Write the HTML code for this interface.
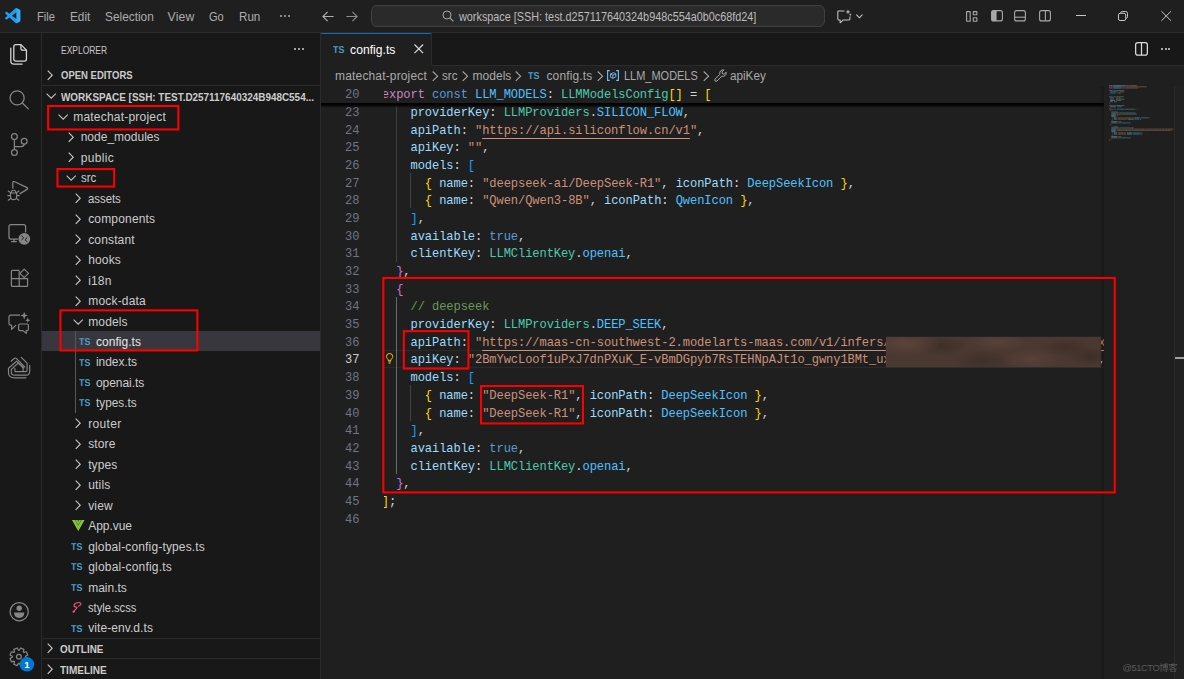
<!DOCTYPE html>
<html lang="en"><head><meta charset="utf-8"><title>config.ts - workspace</title>
<style>
html,body{margin:0;padding:0;overflow:hidden}
body{width:1184px;height:679px;overflow:hidden;background:#1f1f1f;position:relative;font-family:"Liberation Sans","Noto Sans CJK SC",sans-serif;color:#ccc}
.t,.r,svg.i{position:absolute}
.t{white-space:pre;display:block}
.r{display:block}
svg.i{overflow:visible}
.ln{position:absolute;left:330px;width:29.4px;text-align:right;color:#6e7681;white-space:pre}
.cl{position:absolute;left:-1.2px;white-space:pre;color:#d4d4d4}
.ln,.cl{font-family:"Liberation Mono",monospace;font-size:12.1px;letter-spacing:-0.093px;line-height:18px;height:18px}
.k{color:#c586c0}.c{color:#569cd6}.v{color:#4fc1ff}.ty{color:#4ec9b0}.p{color:#9cdcfe}.s{color:#ce9178}.cm{color:#6a9955}
.b1{color:#ffd700}.b2{color:#da70d6}.b3{color:#179fff}
.u{text-decoration:underline;text-decoration-thickness:1px;text-underline-offset:4px}
.rb{position:absolute;border:2px solid #e8000f;box-sizing:border-box}
</style></head><body>
<!-- title bar -->
<div class="r" style="left:0px;top:0px;width:1184px;height:32px;background:#1f1f1f;"></div>
<div class="r" style="left:0px;top:32px;width:1184px;height:1px;background:#2b2b2b;"></div>
<svg class="i" style="left:5.3px;top:8.4px;" width="15.3" height="15.3" viewBox="0 0 100 100" fill="none"><path d="M70.9119 99.3171C72.4869 99.9307 74.2828 99.8914 75.8725 99.1264L96.4608 89.2197C98.6242 88.1787 100 85.9892 100 83.5872V16.4133C100 14.0113 98.6243 11.8218 96.4609 10.7808L75.8725 0.873756C73.7862 -0.130129 71.3446 0.11576 69.5135 1.44695C69.252 1.63711 69.0028 1.84943 68.769 2.08341L29.3551 38.0415L12.1872 25.0096C10.589 23.7965 8.35363 23.8959 6.86933 25.2461L1.36303 30.2549C-0.452552 31.9064 -0.454633 34.7627 1.35853 36.417L16.2471 50.0001L1.35853 63.5832C-0.454633 65.2374 -0.452552 68.0938 1.36303 69.7453L6.86933 74.7541C8.35363 76.1043 10.589 76.2037 12.1872 74.9905L29.3551 61.9587L68.769 97.9167C69.3925 98.5406 70.1246 99.0104 70.9119 99.3171ZM75.0152 27.2989L45.1091 50.0001L75.0152 72.7012V27.2989Z" fill="#1f9cf0" fill-rule="evenodd"/><path d="M75 0.5 L96.5 10.8 Q100 12.5 100 16.4 V83.6 Q100 87.5 96.5 89.2 L75 99.5 Z" fill="#3ab4f7" opacity=".7"/></svg>
<span class="t" style="left:37.10px;top:6.60px;line-height:20px;font-size:12.2px;color:#adadad;transform:scaleX(0.9181);transform-origin:0 50%;">File</span>
<span class="t" style="left:69.60px;top:6.60px;line-height:20px;font-size:12.2px;color:#adadad;transform:scaleX(0.9656);transform-origin:0 50%;">Edit</span>
<span class="t" style="left:104.60px;top:6.60px;line-height:20px;font-size:12.2px;color:#adadad;transform:scaleX(0.9723);transform-origin:0 50%;">Selection</span>
<span class="t" style="left:167.60px;top:6.60px;line-height:20px;font-size:12.2px;color:#adadad;letter-spacing:0.144px;">View</span>
<span class="t" style="left:208.60px;top:6.60px;line-height:20px;font-size:12.2px;color:#adadad;transform:scaleX(0.9094);transform-origin:0 50%;">Go</span>
<span class="t" style="left:238.60px;top:6.60px;line-height:20px;font-size:12.2px;color:#adadad;transform:scaleX(0.9517);transform-origin:0 50%;">Run</span>
<div class="r" style="left:280.4px;top:15.3px;width:1.9px;height:1.9px;background:#adadad;border-radius:1px;"></div>
<div class="r" style="left:284.29999999999995px;top:15.3px;width:1.9px;height:1.9px;background:#adadad;border-radius:1px;"></div>
<div class="r" style="left:288.2px;top:15.3px;width:1.9px;height:1.9px;background:#adadad;border-radius:1px;"></div>
<svg class="i" style="left:322px;top:10.5px;" width="12" height="11" viewBox="0 0 12 11" fill="none"><path d="M5.6 0.8 L0.9 5.5 L5.6 10.2 M0.9 5.5 H11.6" stroke="#b0b0b0" stroke-width="1.1"/></svg>
<svg class="i" style="left:345.5px;top:10.5px;" width="12" height="11" viewBox="0 0 12 11" fill="none"><path d="M6.4 0.8 L11.1 5.5 L6.4 10.2 M11.1 5.5 H0.4" stroke="#8c8c8c" stroke-width="1.1"/></svg>
<div class="r" style="left:371px;top:5px;width:453.5px;height:21.5px;box-sizing:border-box;background:#2a2a2a;border:1px solid #404040;border-radius:6px"></div>
<svg class="i" style="left:442px;top:10px;" width="12" height="12" viewBox="0 0 12 12" fill="none"><circle cx="5" cy="5" r="4" stroke="#a8a8a8" stroke-width="1"/><path d="M7.9 7.9 L11.4 11.4" stroke="#a8a8a8" stroke-width="1.1"/></svg>
<span class="t" style="left:459.35px;top:6.50px;line-height:20px;font-size:12.1px;color:#bcbcbc;transform:scaleX(0.8959);transform-origin:0 50%;">workspace [SSH: test.d257117640324b948c554a0b0c68fd24]</span>
<svg class="i" style="left:836.6px;top:8.6px;" width="15" height="14.5" viewBox="0 0 15 14.5" fill="none"><path d="M7.4 1.9 H1.7 Q0.8 1.9 0.8 2.8 V10 Q0.8 10.9 1.7 10.9 H3.1 V13.8 L6.3 10.9 H12 Q12.9 10.9 12.9 10 V7.4" stroke="#c4c4c4" stroke-width="1.05" stroke-linejoin="round"/><path d="M11 0.3 L11.65 2.25 L13.6 2.9 L11.65 3.55 L11 5.5 L10.35 3.55 L8.4 2.9 L10.35 2.25 Z" fill="#c4c4c4"/><path d="M13.3 4.2 L13.7 5.3 L14.8 5.7 L13.7 6.1 L13.3 7.2 L12.9 6.1 L11.8 5.7 L12.9 5.3 Z" fill="#c4c4c4"/></svg>
<svg class="i" style="left:856px;top:14px;" width="7" height="5" viewBox="0 0 7 5" fill="none"><path d="M0.4 0.6 L3.4 3.8 L6.4 0.6" stroke="#c4c4c4" stroke-width="1.1"/></svg>
<svg class="i" style="left:966px;top:10.5px;" width="12" height="11" viewBox="0 0 12 11" fill="none"><rect x="0.6" y="0.6" width="3.6" height="9.6" rx="0.3" stroke="#a8a8a8" stroke-width="1.1"/><rect x="7.3" y="0.6" width="3.6" height="3.2" rx="0.3" stroke="#a8a8a8" stroke-width="1.1"/><rect x="7.3" y="6.8" width="3.6" height="3.4" rx="0.3" stroke="#a8a8a8" stroke-width="1.1"/></svg>
<svg class="i" style="left:990.5px;top:10px;" width="12" height="11.5" viewBox="0 0 12 11.5" fill="none"><rect x="0.6" y="0.6" width="10.8" height="10.3" rx="2" stroke="#a8a8a8" stroke-width="1.1"/><path d="M2.4 0.6 H5.6 V10.9 H2.4 Q0.6 10.9 0.6 9 V2.5 Q0.6 0.6 2.4 0.6 Z" fill="#a8a8a8"/></svg>
<svg class="i" style="left:1014.2px;top:10px;" width="12" height="11.5" viewBox="0 0 12 11.5" fill="none"><rect x="0.6" y="0.6" width="10.8" height="10.3" rx="2" stroke="#a8a8a8" stroke-width="1.1"/><path d="M0.6 7.2 H11.4" stroke="#a8a8a8" stroke-width="1.1"/></svg>
<svg class="i" style="left:1038.5px;top:10px;" width="12" height="11.5" viewBox="0 0 12 11.5" fill="none"><rect x="0.6" y="0.6" width="10.8" height="10.3" rx="2" stroke="#a8a8a8" stroke-width="1.1"/><path d="M6.4 0.6 V10.9" stroke="#a8a8a8" stroke-width="1.1"/></svg>
<div class="r" style="left:1075.5px;top:15px;width:10px;height:1px;background:#c8c8c8;"></div>
<svg class="i" style="left:1118px;top:11px;" width="10" height="10" viewBox="0 0 10 10" fill="none"><rect x="0.5" y="2.3" width="7.2" height="7.2" rx="1.6" stroke="#c8c8c8" stroke-width="1"/><path d="M2.6 2 Q2.8 0.5 4.3 0.5 H7.6 Q9.5 0.5 9.5 2.4 V5.7 Q9.5 7.2 8 7.4" stroke="#c8c8c8" stroke-width="1"/></svg>
<svg class="i" style="left:1160.5px;top:11px;" width="10.5" height="10" viewBox="0 0 10.5 10" fill="none"><path d="M0.4 0.2 L10.1 9.8 M10.1 0.2 L0.4 9.8" stroke="#c8c8c8" stroke-width="1"/></svg>
<!-- activity bar -->
<div class="r" style="left:0px;top:33px;width:41px;height:646px;background:#181818;"></div>
<div class="r" style="left:41px;top:33px;width:1px;height:646px;background:#2b2b2b;"></div>
<svg class="i" style="left:10px;top:44.4px;" width="17.3" height="21.2" viewBox="0 0 17.3 21.6" fill="none"><path d="M5.9 0.65 H11 L16.6 6.2 V15.2 Q16.6 17.4 14.4 17.4 H5.9 Q3.7 17.4 3.7 15.2 V2.8 Q3.7 0.65 5.9 0.65 Z" stroke="#d7d7d7" stroke-width="1.3" stroke-linejoin="round"/><path d="M11 0.8 V4.6 Q11 6.2 12.6 6.2 H16.4" stroke="#d7d7d7" stroke-width="1.3"/><path d="M0.65 4.2 V17.3 Q0.65 20.5 3.9 20.5 H12.2" stroke="#d7d7d7" stroke-width="1.3" stroke-linecap="round"/></svg>
<svg class="i" style="left:0px;top:84px;" width="42" height="30" viewBox="0 84 42 30" fill="none"><circle cx="17.1" cy="97.9" r="7.05" stroke="#868686" stroke-width="1.25"/><path d="M22.3 103 L28.3 108.9" stroke="#868686" stroke-width="1.3" stroke-linecap="round"/></svg>
<svg class="i" style="left:0px;top:130px;" width="42" height="30" viewBox="0 130 42 30" fill="none"><circle cx="14.4" cy="136.6" r="2.9" stroke="#868686" stroke-width="1.25"/><circle cx="14.4" cy="152.4" r="2.9" stroke="#868686" stroke-width="1.25"/><circle cx="24.2" cy="141.3" r="2.9" stroke="#868686" stroke-width="1.25"/><path d="M14.4 139.5 V149.5 M24.2 144.2 Q24.2 146.6 21 146.6 H14.4" stroke="#868686" stroke-width="1.25"/></svg>
<svg class="i" style="left:0px;top:176px;" width="42" height="30" viewBox="0 176 42 30" fill="none"><path d="M12.8 188.2 V183 Q12.8 180.9 14.8 181.8 L27 187.6 Q28.4 188.5 27 189.4 L20 193.6" stroke="#868686" stroke-width="1.25" stroke-linecap="round" stroke-linejoin="round"/><path d="M10.5 193 H16.7 V196.4 Q16.7 199.6 13.6 199.6 Q10.5 199.6 10.5 196.4 Z" stroke="#868686" stroke-width="1.15" stroke-linejoin="round"/><path d="M11.3 193 Q11.3 190.2 13.6 190.2 Q15.9 190.2 15.9 193" stroke="#868686" stroke-width="1.15"/><path d="M10.4 195.6 H7.8 M16.8 195.6 H19.4 M10.8 192.8 L8.2 191 M16.4 192.8 L19 191 M10.9 198.2 L8.3 200.2 M16.3 198.2 L18.9 200.2" stroke="#868686" stroke-width="1.1" stroke-linecap="round"/></svg>
<svg class="i" style="left:0px;top:220px;" width="42" height="30" viewBox="0 220 42 30" fill="none"><path d="M18 239 H11 Q9 239 9 237 V226.6 Q9 224.6 11 224.6 H23.6 Q25.6 224.6 25.6 226.6 V232.5" stroke="#868686" stroke-width="1.25"/><path d="M14 239 V241.4 M11.2 241.5 H16.8" stroke="#868686" stroke-width="1.25"/><circle cx="24.3" cy="238.8" r="5.9" fill="#868686"/><path d="M21.7 236 L23.7 237.9 L21.7 239.8 M27 237.8 L25 239.7 L27 241.6" stroke="#181818" stroke-width="1" stroke-linecap="round" stroke-linejoin="round"/></svg>
<svg class="i" style="left:0px;top:264px;" width="42" height="30" viewBox="0 264 42 30" fill="none"><path d="M19.2 270.4 H12.4 Q11.4 270.4 11.4 271.4 V285.4 Q11.4 286.4 12.4 286.4 H26.6 Q27.6 286.4 27.6 285.4 V278.6 H11.4 M19.2 270.4 V286.4" stroke="#868686" stroke-width="1.2" stroke-linejoin="round"/><path d="M24.2 269.1 L28.5 273.4 L24.2 277.7 L19.9 273.4 Z" stroke="#868686" stroke-width="1.2" stroke-linejoin="round"/></svg>
<svg class="i" style="left:0px;top:308px;" width="42" height="30" viewBox="0 308 42 30" fill="none"><path d="M19.6 315.2 H10.6 Q9 315.2 9 316.8 V323.6 Q9 325.2 10.6 325.2 H11.6 V329.4 L15.8 325.4" stroke="#868686" stroke-width="1.2" stroke-linejoin="round" stroke-linecap="round"/><path d="M20 324 H27 Q28.4 324 28.4 325.4 V329.2 Q28.4 330.6 27 330.6 H26.2 V333.4 L23 330.6 H20 Q18.6 330.6 18.6 329.2 V325.4 Q18.6 324 20 324 Z" stroke="#868686" stroke-width="1.2" stroke-linejoin="round"/><path d="M24.2 311.8 L25.2 314.6 L28 315.6 L25.2 316.6 L24.2 319.4 L23.2 316.6 L20.4 315.6 L23.2 314.6 Z" fill="#868686"/><path d="M27.8 317.6 L28.5 319.6 L30.5 320.3 L28.5 321 L27.8 323 L27.1 321 L25.1 320.3 L27.1 319.6 Z" fill="#868686"/></svg>
<svg class="i" style="left:0px;top:352px;" width="42" height="30" viewBox="0 352 42 30" fill="none"><g stroke="#868686" stroke-width="1.15" stroke-linecap="round" stroke-linejoin="round"><path d="M11.1 361.2 L14.2 358.5 Q15.4 357.5 16.6 358.6 L24.7 367"/><path d="M25.9 377.85 H14.85 Q8.5 377.85 8.5 372.7 V368.3 L16.5 361.2 L23.8 368"/><path d="M29.7 365.4 V370.9 Q29.7 375.1 26.2 375.1 H14.85 Q11.3 375.1 11.3 372.7 V369.5 L18.15 363.1 L23.1 367.6 V370.6"/><path d="M21.2 357.4 L27.1 363.1 V370 Q27.1 371.6 25.5 371.6 H14.9 V368.6"/></g></svg>
<svg class="i" style="left:0px;top:598px;" width="42" height="28" viewBox="0 598 42 28" fill="none"><circle cx="19.2" cy="611.7" r="9.1" stroke="#868686" stroke-width="1.25"/><circle cx="19.2" cy="608.3" r="2.7" fill="#868686"/><path d="M14.1 612.6 H24.3 Q24.3 617.9 19.2 617.9 Q14.1 617.9 14.1 612.6 Z" fill="#868686"/></svg>
<svg class="i" style="left:0px;top:644px;" width="42" height="35" viewBox="0 644 42 35" fill="none"><path d="M27.73 658.52 L26.36 661.83 L23.85 661.17 L23.27 661.75 L23.93 664.26 L20.62 665.63 L19.31 663.39 L18.49 663.39 L17.18 665.63 L13.87 664.26 L14.53 661.75 L13.95 661.17 L11.44 661.83 L10.07 658.52 L12.31 657.21 L12.31 656.39 L10.07 655.08 L11.44 651.77 L13.95 652.43 L14.53 651.85 L13.87 649.34 L17.18 647.97 L18.49 650.21 L19.31 650.21 L20.62 647.97 L23.93 649.34 L23.27 651.85 L23.85 652.43 L26.36 651.77 L27.73 655.08 L25.49 656.39 L25.49 657.21 Z" stroke="#868686" stroke-width="1.2" stroke-linejoin="round"/><circle cx="18.9" cy="656.8" r="2.4" stroke="#868686" stroke-width="1.2"/><circle cx="26.9" cy="664.3" r="7.3" fill="#0078d4"/></svg>
<span class="t" style="left:23.9px;top:658.8px;width:6px;text-align:center;font-size:9.5px;line-height:11px;font-weight:bold;color:#fff">1</span>
<!-- side bar -->
<div class="r" style="left:42px;top:33px;width:278px;height:646px;background:#181818;"></div>
<div class="r" style="left:320px;top:33px;width:1px;height:646px;background:#2b2b2b;"></div>
<span class="t" style="left:60.70px;top:40.50px;line-height:20px;font-size:10.4px;color:#c8c8c8;transform:scaleX(0.8139);transform-origin:0 50%;">EXPLORER</span>
<div class="r" style="left:293.9px;top:47.7px;width:2px;height:2px;background:#cccccc;border-radius:1px;"></div>
<div class="r" style="left:297.7px;top:47.7px;width:2px;height:2px;background:#cccccc;border-radius:1px;"></div>
<div class="r" style="left:301.5px;top:47.7px;width:2px;height:2px;background:#cccccc;border-radius:1px;"></div>
<svg class="i" style="left:47.300000000000004px;top:70.39999999999999px;" width="6" height="10.4" viewBox="0 0 6 10.4" fill="none"><path d="M0.7 0.6 L5.2 5.2 L0.7 9.8" stroke="#c8c8c8" stroke-width="1.15"/></svg>
<span class="t" style="left:60.70px;top:66.30px;line-height:20px;font-size:10.3px;color:#cccccc;transform:scaleX(0.9221);transform-origin:0 50%;font-weight:bold;">OPEN EDITORS</span>
<div class="r" style="left:42px;top:85px;width:278px;height:1px;background:#2b2b2b;"></div>
<svg class="i" style="left:46.4px;top:93.0px;" width="10.4" height="6" viewBox="0 0 10.4 6" fill="none"><path d="M0.6 0.6 L5.2 5.2 L9.8 0.6" stroke="#c5c5c5" stroke-width="1.05"/></svg>
<span class="t" style="left:60.70px;top:87.70px;line-height:20px;font-size:10.3px;color:#cccccc;transform:scaleX(0.9635);transform-origin:0 50%;font-weight:bold;">WORKSPACE [SSH: TEST.D257117640324B948C554...</span>
<div class="r" style="left:42px;top:331.2px;width:278px;height:20.2px;background:#37373d;"></div>
<div class="r" style="left:75px;top:331.2px;width:1px;height:81.4px;background:#585858;"></div>
<svg class="i" style="left:58px;top:113.95px;" width="10.4" height="6" viewBox="0 0 10.4 6" fill="none"><path d="M0.6 0.6 L5.2 5.2 L9.8 0.6" stroke="#c5c5c5" stroke-width="1.05"/></svg>
<span class="t" style="left:73.20px;top:106.95px;line-height:20px;font-size:12px;color:#cccccc;letter-spacing:0.214px;">matechat-project</span>
<svg class="i" style="left:67.9px;top:132.01000000000002px;" width="6" height="10.4" viewBox="0 0 6 10.4" fill="none"><path d="M0.7 0.6 L5.2 5.2 L0.7 9.8" stroke="#c8c8c8" stroke-width="1.15"/></svg>
<span class="t" style="left:80.70px;top:127.41px;line-height:20px;font-size:12px;color:#cccccc;letter-spacing:0.006px;">node_modules</span>
<svg class="i" style="left:67.9px;top:152.47000000000003px;" width="6" height="10.4" viewBox="0 0 6 10.4" fill="none"><path d="M0.7 0.6 L5.2 5.2 L0.7 9.8" stroke="#c8c8c8" stroke-width="1.15"/></svg>
<span class="t" style="left:80.70px;top:147.87px;line-height:20px;font-size:12px;color:#cccccc;letter-spacing:0.324px;">public</span>
<svg class="i" style="left:65.6px;top:175.33px;" width="10.4" height="6" viewBox="0 0 10.4 6" fill="none"><path d="M0.6 0.6 L5.2 5.2 L9.8 0.6" stroke="#c5c5c5" stroke-width="1.05"/></svg>
<span class="t" style="left:80.70px;top:168.33px;line-height:20px;font-size:12px;color:#cccccc;transform:scaleX(0.9565);transform-origin:0 50%;">src</span>
<svg class="i" style="left:75.3px;top:193.39000000000001px;" width="6" height="10.4" viewBox="0 0 6 10.4" fill="none"><path d="M0.7 0.6 L5.2 5.2 L0.7 9.8" stroke="#c8c8c8" stroke-width="1.15"/></svg>
<span class="t" style="left:88.20px;top:188.79px;line-height:20px;font-size:12px;color:#cccccc;transform:scaleX(0.9457);transform-origin:0 50%;">assets</span>
<svg class="i" style="left:75.3px;top:213.85000000000002px;" width="6" height="10.4" viewBox="0 0 6 10.4" fill="none"><path d="M0.7 0.6 L5.2 5.2 L0.7 9.8" stroke="#c8c8c8" stroke-width="1.15"/></svg>
<span class="t" style="left:88.20px;top:209.25px;line-height:20px;font-size:12px;color:#cccccc;letter-spacing:0.168px;">components</span>
<svg class="i" style="left:75.3px;top:234.31px;" width="6" height="10.4" viewBox="0 0 6 10.4" fill="none"><path d="M0.7 0.6 L5.2 5.2 L0.7 9.8" stroke="#c8c8c8" stroke-width="1.15"/></svg>
<span class="t" style="left:88.20px;top:229.71px;line-height:20px;font-size:12px;color:#cccccc;letter-spacing:0.148px;">constant</span>
<svg class="i" style="left:75.3px;top:254.77000000000004px;" width="6" height="10.4" viewBox="0 0 6 10.4" fill="none"><path d="M0.7 0.6 L5.2 5.2 L0.7 9.8" stroke="#c8c8c8" stroke-width="1.15"/></svg>
<span class="t" style="left:88.20px;top:250.17px;line-height:20px;font-size:12px;color:#cccccc;letter-spacing:0.156px;">hooks</span>
<svg class="i" style="left:75.3px;top:275.23px;" width="6" height="10.4" viewBox="0 0 6 10.4" fill="none"><path d="M0.7 0.6 L5.2 5.2 L0.7 9.8" stroke="#c8c8c8" stroke-width="1.15"/></svg>
<span class="t" style="left:88.20px;top:270.63px;line-height:20px;font-size:12px;color:#cccccc;letter-spacing:0.153px;">i18n</span>
<svg class="i" style="left:75.3px;top:295.69px;" width="6" height="10.4" viewBox="0 0 6 10.4" fill="none"><path d="M0.7 0.6 L5.2 5.2 L0.7 9.8" stroke="#c8c8c8" stroke-width="1.15"/></svg>
<span class="t" style="left:88.20px;top:291.09px;line-height:20px;font-size:12px;color:#cccccc;letter-spacing:0.197px;">mock-data</span>
<svg class="i" style="left:73px;top:318.55px;" width="10.4" height="6" viewBox="0 0 10.4 6" fill="none"><path d="M0.6 0.6 L5.2 5.2 L9.8 0.6" stroke="#c5c5c5" stroke-width="1.05"/></svg>
<span class="t" style="left:88.20px;top:311.55px;line-height:20px;font-size:12px;color:#cccccc;letter-spacing:0.144px;">models</span>
<span class="t" style="left:78.65px;top:333.11px;line-height:20px;font-size:9.9px;font-weight:bold;color:#4b9fc9;text-rendering:geometricPrecision;transform:scaleX(0.9011);transform-origin:0 50%">TS</span>
<span class="t" style="left:95.95px;top:332.01px;line-height:20px;font-size:12px;color:#e6e6e6;letter-spacing:0.040px;">config.ts</span>
<span class="t" style="left:78.65px;top:353.57px;line-height:20px;font-size:9.9px;font-weight:bold;color:#4b9fc9;text-rendering:geometricPrecision;transform:scaleX(0.9011);transform-origin:0 50%">TS</span>
<span class="t" style="left:95.95px;top:352.47px;line-height:20px;font-size:12px;color:#cccccc;letter-spacing:-0.038px;">index.ts</span>
<span class="t" style="left:78.65px;top:374.03px;line-height:20px;font-size:9.9px;font-weight:bold;color:#4b9fc9;text-rendering:geometricPrecision;transform:scaleX(0.9011);transform-origin:0 50%">TS</span>
<span class="t" style="left:95.95px;top:372.93px;line-height:20px;font-size:12px;color:#cccccc;letter-spacing:-0.045px;">openai.ts</span>
<span class="t" style="left:78.65px;top:394.49px;line-height:20px;font-size:9.9px;font-weight:bold;color:#4b9fc9;text-rendering:geometricPrecision;transform:scaleX(0.9011);transform-origin:0 50%">TS</span>
<span class="t" style="left:95.95px;top:393.39px;line-height:20px;font-size:12px;color:#cccccc;transform:scaleX(0.9807);transform-origin:0 50%;">types.ts</span>
<svg class="i" style="left:75.3px;top:418.45000000000005px;" width="6" height="10.4" viewBox="0 0 6 10.4" fill="none"><path d="M0.7 0.6 L5.2 5.2 L0.7 9.8" stroke="#c8c8c8" stroke-width="1.15"/></svg>
<span class="t" style="left:88.20px;top:413.85px;line-height:20px;font-size:12px;color:#cccccc;letter-spacing:0.325px;">router</span>
<svg class="i" style="left:75.3px;top:438.91px;" width="6" height="10.4" viewBox="0 0 6 10.4" fill="none"><path d="M0.7 0.6 L5.2 5.2 L0.7 9.8" stroke="#c8c8c8" stroke-width="1.15"/></svg>
<span class="t" style="left:88.20px;top:434.31px;line-height:20px;font-size:12px;color:#cccccc;letter-spacing:0.124px;">store</span>
<svg class="i" style="left:75.3px;top:459.37px;" width="6" height="10.4" viewBox="0 0 6 10.4" fill="none"><path d="M0.7 0.6 L5.2 5.2 L0.7 9.8" stroke="#c8c8c8" stroke-width="1.15"/></svg>
<span class="t" style="left:88.20px;top:454.77px;line-height:20px;font-size:12px;color:#cccccc;letter-spacing:0.074px;">types</span>
<svg class="i" style="left:75.3px;top:479.83000000000004px;" width="6" height="10.4" viewBox="0 0 6 10.4" fill="none"><path d="M0.7 0.6 L5.2 5.2 L0.7 9.8" stroke="#c8c8c8" stroke-width="1.15"/></svg>
<span class="t" style="left:88.20px;top:475.23px;line-height:20px;font-size:12px;color:#cccccc;letter-spacing:0.192px;">utils</span>
<svg class="i" style="left:75.3px;top:500.29px;" width="6" height="10.4" viewBox="0 0 6 10.4" fill="none"><path d="M0.7 0.6 L5.2 5.2 L0.7 9.8" stroke="#c8c8c8" stroke-width="1.15"/></svg>
<span class="t" style="left:88.20px;top:495.69px;line-height:20px;font-size:12px;color:#cccccc;letter-spacing:0.136px;">view</span>
<svg class="i" style="left:72.1px;top:519.75px;" width="12.5" height="11" viewBox="0 0 12.5 11" fill="none"><path d="M0 0 H2.9 L6.25 5.9 L9.6 0 H12.5 L6.25 11 Z" fill="#84c43e"/><path d="M3.5 0 H5.2 L6.25 1.9 L7.3 0 H9 L6.25 4.9 Z" fill="#84c43e"/><path d="M0 0 H12.5 L6.25 11 Z" fill="#84c43e" opacity=".45"/></svg>
<span class="t" style="left:88.20px;top:516.15px;line-height:20px;font-size:12px;color:#cccccc;letter-spacing:-0.033px;">App.vue</span>
<span class="t" style="left:71.15px;top:537.71px;line-height:20px;font-size:9.9px;font-weight:bold;color:#4b9fc9;text-rendering:geometricPrecision;transform:scaleX(0.9011);transform-origin:0 50%">TS</span>
<span class="t" style="left:88.20px;top:536.61px;line-height:20px;font-size:12px;color:#cccccc;letter-spacing:0.155px;">global-config-types.ts</span>
<span class="t" style="left:71.15px;top:558.17px;line-height:20px;font-size:9.9px;font-weight:bold;color:#4b9fc9;text-rendering:geometricPrecision;transform:scaleX(0.9011);transform-origin:0 50%">TS</span>
<span class="t" style="left:88.20px;top:557.07px;line-height:20px;font-size:12px;color:#cccccc;letter-spacing:0.193px;">global-config.ts</span>
<span class="t" style="left:71.15px;top:578.63px;line-height:20px;font-size:9.9px;font-weight:bold;color:#4b9fc9;text-rendering:geometricPrecision;transform:scaleX(0.9011);transform-origin:0 50%">TS</span>
<span class="t" style="left:88.20px;top:577.53px;line-height:20px;font-size:12px;color:#cccccc;letter-spacing:-0.018px;">main.ts</span>
<svg class="i" style="left:72.2px;top:602.39px;" width="9.4" height="10.6" viewBox="0 0 9.4 10.6" fill="none"><path d="M6.6 4.1 Q9.6 2.6 8.7 1.2 Q7.4 -0.1 4.4 1.1 Q1.4 2.5 2.1 4.1 Q3 5.4 5 5.1 Q4.8 7.2 2.7 8.2 Q0.7 9.1 1 10 Q1.9 10.6 2.7 9.5" stroke="#f0507c" stroke-width="1.1" stroke-linecap="round" stroke-linejoin="round"/></svg>
<span class="t" style="left:88.20px;top:597.99px;line-height:20px;font-size:12px;color:#cccccc;transform:scaleX(0.9287);transform-origin:0 50%;">style.scss</span>
<span class="t" style="left:71.15px;top:619.55px;line-height:20px;font-size:9.9px;font-weight:bold;color:#4b9fc9;text-rendering:geometricPrecision;transform:scaleX(0.9011);transform-origin:0 50%">TS</span>
<span class="t" style="left:88.20px;top:618.45px;line-height:20px;font-size:12px;color:#cccccc;letter-spacing:0.077px;">vite-env.d.ts</span>
<div class="r" style="left:42px;top:638px;width:278px;height:1px;background:#2b2b2b;"></div>
<svg class="i" style="left:47.300000000000004px;top:643.3px;" width="6" height="10.4" viewBox="0 0 6 10.4" fill="none"><path d="M0.7 0.6 L5.2 5.2 L0.7 9.8" stroke="#c8c8c8" stroke-width="1.15"/></svg>
<span class="t" style="left:59.80px;top:639.80px;line-height:20px;font-size:10.3px;color:#cccccc;transform:scaleX(0.9601);transform-origin:0 50%;font-weight:bold;">OUTLINE</span>
<div class="r" style="left:42px;top:658px;width:278px;height:1px;background:#2b2b2b;"></div>
<svg class="i" style="left:47.300000000000004px;top:664.1999999999999px;" width="6" height="10.4" viewBox="0 0 6 10.4" fill="none"><path d="M0.7 0.6 L5.2 5.2 L0.7 9.8" stroke="#c8c8c8" stroke-width="1.15"/></svg>
<span class="t" style="left:59.80px;top:660.60px;line-height:20px;font-size:10.3px;color:#cccccc;transform:scaleX(0.9737);transform-origin:0 50%;font-weight:bold;">TIMELINE</span>
<!-- editor group -->
<div class="r" style="left:321px;top:33px;width:863px;height:32px;background:#181818;"></div>
<div class="r" style="left:321px;top:64.5px;width:863px;height:1px;background:#2b2b2b;"></div>
<div class="r" style="left:321px;top:33px;width:110.5px;height:32.5px;background:#1f1f1f;"></div>
<div class="r" style="left:321px;top:33px;width:110.5px;height:1px;background:#0b6cbd;"></div>
<div class="r" style="left:431.3px;top:33px;width:1px;height:32px;background:#2b2b2b;"></div>
<span class="t" style="left:333.20px;top:40.70px;line-height:20px;font-size:9.9px;font-weight:bold;color:#4b9fc9;text-rendering:geometricPrecision;transform:scaleX(0.9011);transform-origin:0 50%">TS</span>
<span class="t" style="left:350.10px;top:39.90px;line-height:20px;font-size:12.1px;color:#ffffff;letter-spacing:0.026px;">config.ts</span>
<svg class="i" style="left:413.5px;top:44.2px;" width="9.6" height="9.6" viewBox="0 0 9.6 9.6" fill="none"><path d="M0.5 0.5 L9.1 9.1 M9.1 0.5 L0.5 9.1" stroke="#e0e0e0" stroke-width="1.1"/></svg>
<svg class="i" style="left:1135.1px;top:42.1px;" width="13" height="13.8" viewBox="0 0 13 13.8" fill="none"><rect x="0.65" y="0.65" width="11.7" height="12.5" rx="2.2" stroke="#dcdcdc" stroke-width="1.25"/><path d="M6.5 0.65 V13.15" stroke="#dcdcdc" stroke-width="1.25"/></svg>
<div class="r" style="left:1160.7px;top:48.2px;width:2px;height:2px;background:#d8d8d8;border-radius:1px;"></div>
<div class="r" style="left:1164.5px;top:48.2px;width:2px;height:2px;background:#d8d8d8;border-radius:1px;"></div>
<div class="r" style="left:1168.3px;top:48.2px;width:2px;height:2px;background:#d8d8d8;border-radius:1px;"></div>
<span class="t" style="left:335.10px;top:65.80px;line-height:20px;font-size:12px;color:#a9a9a9;letter-spacing:0.152px;">matechat-project</span>
<svg class="i" style="left:432.3px;top:70.6px;" width="6.4" height="10.4" viewBox="0 0 6.4 10.4" fill="none"><path d="M0.7 0.5 L5.6 5.2 L0.7 9.9" stroke="#a9a9a9" stroke-width="1.05"/></svg>
<span class="t" style="left:442.30px;top:65.80px;line-height:20px;font-size:12px;color:#a9a9a9;transform:scaleX(0.9721);transform-origin:0 50%;">src</span>
<svg class="i" style="left:462px;top:70.6px;" width="6.4" height="10.4" viewBox="0 0 6.4 10.4" fill="none"><path d="M0.7 0.5 L5.6 5.2 L0.7 9.9" stroke="#a9a9a9" stroke-width="1.05"/></svg>
<span class="t" style="left:472.60px;top:65.80px;line-height:20px;font-size:12px;color:#a9a9a9;letter-spacing:0.019px;">models</span>
<svg class="i" style="left:515.3px;top:70.6px;" width="6.4" height="10.4" viewBox="0 0 6.4 10.4" fill="none"><path d="M0.7 0.5 L5.6 5.2 L0.7 9.9" stroke="#a9a9a9" stroke-width="1.05"/></svg>
<span class="t" style="left:528.30px;top:67.40px;line-height:20px;font-size:9.9px;font-weight:bold;color:#4b9fc9;text-rendering:geometricPrecision;transform:scaleX(0.9011);transform-origin:0 50%">TS</span>
<span class="t" style="left:546.50px;top:65.80px;line-height:20px;font-size:12px;color:#a9a9a9;letter-spacing:0.123px;">config.ts</span>
<svg class="i" style="left:596.9px;top:70.6px;" width="6.4" height="10.4" viewBox="0 0 6.4 10.4" fill="none"><path d="M0.7 0.5 L5.6 5.2 L0.7 9.9" stroke="#a9a9a9" stroke-width="1.05"/></svg>
<svg class="i" style="left:607.4px;top:70.2px;" width="12" height="11" viewBox="0 0 12 11" fill="none"><path d="M2.8 0.6 H0.6 V10.4 H2.8 M9.2 0.6 H11.4 V10.4 H9.2" stroke="#75beff" stroke-width="1.1"/><path d="M3.4 4 L6.4 2.6 L8.8 3.8 V6.8 L5.8 8.4 L3.4 7.2 Z M3.4 4 L5.8 5.2 L8.8 3.8 M5.8 5.2 V8.4" stroke="#75beff" stroke-width="0.9" stroke-linejoin="round"/></svg>
<span class="t" style="left:624.10px;top:65.80px;line-height:20px;font-size:12px;color:#a9a9a9;transform:scaleX(0.9145);transform-origin:0 50%;">LLM_MODELS</span>
<svg class="i" style="left:702.5px;top:70.6px;" width="6.4" height="10.4" viewBox="0 0 6.4 10.4" fill="none"><path d="M0.7 0.5 L5.6 5.2 L0.7 9.9" stroke="#a9a9a9" stroke-width="1.05"/></svg>
<svg class="i" style="left:714px;top:69.39999999999999px;" width="13" height="13" viewBox="0 0 13 13" fill="none"><path d="M12.2 3.2 Q12.6 5.6 10.8 6.8 Q9.4 7.7 7.8 7.2 L3 12 Q2 12.8 1.1 11.9 Q0.3 11 1.1 10 L5.9 5.3 Q5.3 3.4 6.6 1.9 Q8 0.5 10 0.9 L8 2.9 L8.4 4.7 L10.2 5.1 Z" stroke="#a9a9a9" stroke-width="1" stroke-linejoin="round"/></svg>
<span class="t" style="left:729.60px;top:65.80px;line-height:20px;font-size:12px;color:#a9a9a9;transform:scaleX(0.9757);transform-origin:0 50%;">apiKey</span>
<div class="r" style="left:384.2px;top:85.5px;width:719.8px;height:593.5px;overflow:hidden"><div class="r" style="left:-1.2px;top:0;width:721px;height:593.5px">
<div class="r" style="left:0;top:264.37px;width:721px;height:17.7px;box-sizing:border-box;border-top:1px solid #2a2a2a;border-bottom:1px solid #2a2a2a"></div>
<div class="cl" style="top:18.45px">    <span class="p">providerKey</span>: <span class="ty">LLMProviders</span>.<span class="v">SILICON_FLOW</span>,</div>
<div class="cl" style="top:36.13px">    <span class="p">apiPath</span>: <span class="s">&quot;</span><span class="s u">https://api.siliconflow.cn/v1</span><span class="s">&quot;</span>,</div>
<div class="cl" style="top:53.81px">    <span class="p">apiKey</span>: <span class="s">&quot;&quot;</span>,</div>
<div class="cl" style="top:71.49px">    <span class="p">models</span>: <span class="b3">[</span></div>
<div class="cl" style="top:89.17px">      <span class="b1">{</span> <span class="p">name</span>: <span class="s">&quot;deepseek-ai/DeepSeek-R1&quot;</span>, <span class="p">iconPath</span>: <span class="v">DeepSeekIcon</span> <span class="b1">}</span>,</div>
<div class="cl" style="top:106.85px">      <span class="b1">{</span> <span class="p">name</span>: <span class="s">&quot;Qwen/Qwen3-8B&quot;</span>, <span class="p">iconPath</span>: <span class="v">QwenIcon</span> <span class="b1">}</span>,</div>
<div class="cl" style="top:124.53px">    <span class="b3">]</span>,</div>
<div class="cl" style="top:142.21px">    <span class="p">available</span>: <span class="c">true</span>,</div>
<div class="cl" style="top:159.89px">    <span class="p">clientKey</span>: <span class="ty">LLMClientKey</span>.<span class="v">openai</span>,</div>
<div class="cl" style="top:177.57px">  <span class="b2">}</span>,</div>
<div class="cl" style="top:195.25px">  <span class="b2">{</span></div>
<div class="cl" style="top:212.93px">    <span class="cm">// deepseek</span></div>
<div class="cl" style="top:230.61px">    <span class="p">providerKey</span>: <span class="ty">LLMProviders</span>.<span class="v">DEEP_SEEK</span>,</div>
<div class="cl" style="top:248.29px">    <span class="p">apiPath</span>: <span class="s">&quot;</span><span class="s u">https://maas-cn-southwest-2.modelarts-maas.com/v1/infers/xxxxxxxx-xxxx-xxxx-xxxx-xxxxxxfxxxxx/v1</span><span class="s">&quot;</span>,</div>
<div class="cl" style="top:265.97px">    <span class="p">apiKey</span>: <span class="s">&quot;2BmYwcLoof1uPxJ7dnPXuK_E-vBmDGpyb7RsTEHNpAJt1o_gwny1BMt_uxxxxxxxxxxxxxxxxxxxxxxxxxxxxx&quot;</span>,</div>
<div class="cl" style="top:283.65px">    <span class="p">models</span>: <span class="b3">[</span></div>
<div class="cl" style="top:301.33px">      <span class="b1">{</span> <span class="p">name</span>: <span class="s">&quot;DeepSeek-R1&quot;</span>, <span class="p">iconPath</span>: <span class="v">DeepSeekIcon</span> <span class="b1">}</span>,</div>
<div class="cl" style="top:319.01px">      <span class="b1">{</span> <span class="p">name</span>: <span class="s">&quot;DeepSeek-R1&quot;</span>, <span class="p">iconPath</span>: <span class="v">DeepSeekIcon</span> <span class="b1">}</span>,</div>
<div class="cl" style="top:336.69px">    <span class="b3">]</span>,</div>
<div class="cl" style="top:354.37px">    <span class="p">available</span>: <span class="c">true</span>,</div>
<div class="cl" style="top:372.05px">    <span class="p">clientKey</span>: <span class="ty">LLMClientKey</span>.<span class="v">openai</span>,</div>
<div class="cl" style="top:389.73px">  <span class="b2">}</span>,</div>
<div class="cl" style="top:407.41px"><span class="b1">]</span>;</div>
<div class="cl" style="top:425.09px"></div>
<div class="r" style="left:503px;top:251.3px;width:214.6px;height:30px;background:radial-gradient(ellipse 34px 12px at 9% 22%,#5b4439 0,rgba(91,68,57,0) 100%),radial-gradient(ellipse 30px 10px at 52% 15%,#58423a 0,rgba(88,66,58,0) 100%),radial-gradient(ellipse 26px 10px at 26% 30%,#3e2f2a 0,rgba(62,47,42,0) 100%),radial-gradient(ellipse 30px 11px at 45% 80%,#3f302b 0,rgba(63,48,43,0) 100%),radial-gradient(ellipse 30px 11px at 68% 75%,#574138 0,rgba(87,65,56,0) 100%),radial-gradient(ellipse 24px 10px at 84% 35%,#403029 0,rgba(64,48,41,0) 100%),radial-gradient(ellipse 24px 10px at 95% 65%,#3d2e29 0,rgba(61,46,41,0) 100%),#4a3831;box-shadow:0 0 1.2px #4a3831"></div>
<div class="r" style="left:0px;top:0px;width:721px;height:18px;background:#1f1f1f;"></div>
<div class="cl" style="top:0.80px"><span class="k">export</span> <span class="c">const</span> <span class="v">LLM_MODELS</span>: <span class="ty">LLMModelsConfig</span><span class="b1">[]</span> = <span class="b1">[</span></div>
</div></div>
<div class="r" style="left:396.3px;top:104.50px;width:1px;height:157.03px;background:#404040;"></div>
<div class="r" style="left:410.4px;top:173.13px;width:1px;height:35.36px;background:#404040;"></div>
<div class="r" style="left:396.3px;top:296.89px;width:1px;height:176.80px;background:#6b6b6b;"></div>
<div class="r" style="left:410.4px;top:385.29px;width:1px;height:35.36px;background:#404040;"></div>
<div class="ln" style="top:86.30px">20</div>
<div class="ln" style="top:103.95px">23</div>
<div class="ln" style="top:121.63px">24</div>
<div class="ln" style="top:139.31px">25</div>
<div class="ln" style="top:156.99px">26</div>
<div class="ln" style="top:174.67px">27</div>
<div class="ln" style="top:192.35px">28</div>
<div class="ln" style="top:210.03px">29</div>
<div class="ln" style="top:227.71px">30</div>
<div class="ln" style="top:245.39px">31</div>
<div class="ln" style="top:263.07px">32</div>
<div class="ln" style="top:280.75px">33</div>
<div class="ln" style="top:298.43px">34</div>
<div class="ln" style="top:316.11px">35</div>
<div class="ln" style="top:333.79px">36</div>
<div class="ln" style="top:351.47px;color:#cccccc">37</div>
<div class="ln" style="top:369.15px">38</div>
<div class="ln" style="top:386.83px">39</div>
<div class="ln" style="top:404.51px">40</div>
<div class="ln" style="top:422.19px">41</div>
<div class="ln" style="top:439.87px">42</div>
<div class="ln" style="top:457.55px">43</div>
<div class="ln" style="top:475.23px">44</div>
<div class="ln" style="top:492.91px">45</div>
<div class="ln" style="top:510.59px">46</div>
<div class="r" style="left:321px;top:103px;width:783px;height:4.5px;background:linear-gradient(#000 0,#050505 40%,rgba(10,10,10,0) 100%)"></div>
<svg class="i" style="left:385.6px;top:353.07px;" width="7.2" height="10.8" viewBox="0 0 8 12" fill="none"><path d="M2.4 8.2 Q2.4 7 1.5 6.1 Q0.55 5.1 0.55 3.8 Q0.55 0.55 4 0.55 Q7.45 0.55 7.45 3.8 Q7.45 5.1 6.5 6.1 Q5.6 7 5.6 8.2 Z M2.6 9.8 H5.4 M3 11.3 H5" stroke="#ffcc00" stroke-width="1.05" stroke-linejoin="round"/></svg>
<div class="r" style="left:1099px;top:85.5px;width:5px;height:593.5px;background:linear-gradient(90deg,rgba(0,0,0,0),rgba(0,0,0,.22))"></div>
<svg class="i" style="left:1109.3px;top:85.3px;" width="65" height="58" viewBox="0 0 65 58" fill="none"><g opacity="0.62"><path d="M0.00 0.55h0.5M0.62 0.55h0.5M1.24 0.55h0.5M1.86 0.55h0.5M2.48 0.55h0.5M3.10 0.55h0.5M17.36 0.55h0.5M17.98 0.55h0.5M18.60 0.55h0.5M19.22 0.55h0.5M0.00 1.80h0.5M0.62 1.80h0.5M1.24 1.80h0.5M1.86 1.80h0.5M2.48 1.80h0.5M3.10 1.80h0.5M13.64 1.80h0.5M14.26 1.80h0.5M14.88 1.80h0.5M15.50 1.80h0.5M0.00 3.04h0.5M0.62 3.04h0.5M1.24 3.04h0.5M1.86 3.04h0.5M2.48 3.04h0.5M3.10 3.04h0.5M12.40 3.04h0.5M13.02 3.04h0.5M13.64 3.04h0.5M14.26 3.04h0.5M0.00 5.53h0.5M0.62 5.53h0.5M1.24 5.53h0.5M1.86 5.53h0.5M2.48 5.53h0.5M3.10 5.53h0.5M0.00 11.76h0.5M0.62 11.76h0.5M1.24 11.76h0.5M1.86 11.76h0.5M2.48 11.76h0.5M3.10 11.76h0.5M0.00 20.47h0.5M0.62 20.47h0.5M1.24 20.47h0.5M1.86 20.47h0.5M2.48 20.47h0.5M3.10 20.47h0.5M0.00 24.21h0.5M0.62 24.21h0.5M1.24 24.21h0.5M1.86 24.21h0.5M2.48 24.21h0.5M3.10 24.21h0.5" stroke="#c586c0" stroke-width="0.9"/><path d="M4.34 0.55h0.5M4.96 0.55h0.5M5.58 0.55h0.5M6.20 0.55h0.5M6.82 0.55h0.5M7.44 0.55h0.5M8.06 0.55h0.5M8.68 0.55h0.5M9.30 0.55h0.5M9.92 0.55h0.5M10.54 0.55h0.5M11.16 0.55h0.5M11.78 0.55h0.5M12.40 0.55h0.5M13.02 0.55h0.5M13.64 0.55h0.5M14.26 0.55h0.5M14.88 0.55h0.5M15.50 0.55h0.5M16.12 0.55h0.5M4.34 1.80h0.5M4.96 1.80h0.5M5.58 1.80h0.5M6.20 1.80h0.5M6.82 1.80h0.5M7.44 1.80h0.5M8.06 1.80h0.5M8.68 1.80h0.5M9.30 1.80h0.5M9.92 1.80h0.5M10.54 1.80h0.5M11.16 1.80h0.5M11.78 1.80h0.5M12.40 1.80h0.5M4.34 3.04h0.5M4.96 3.04h0.5M5.58 3.04h0.5M6.20 3.04h0.5M6.82 3.04h0.5M7.44 3.04h0.5M8.06 3.04h0.5M8.68 3.04h0.5M9.30 3.04h0.5M9.92 3.04h0.5M10.54 3.04h0.5M11.16 3.04h0.5M1.24 15.49h0.5M1.86 15.49h0.5M2.48 15.49h0.5M3.10 15.49h0.5M3.72 15.49h0.5M4.34 15.49h0.5M4.96 15.49h0.5M5.58 15.49h0.5M1.24 16.74h0.5M1.86 16.74h0.5M2.48 16.74h0.5M3.10 16.74h0.5M1.24 21.72h0.5M1.86 21.72h0.5M2.48 21.72h0.5M3.10 21.72h0.5M3.72 21.72h0.5M4.34 21.72h0.5M4.96 21.72h0.5M5.58 21.72h0.5M6.20 21.72h0.5M2.48 27.94h0.5M3.10 27.94h0.5M3.72 27.94h0.5M4.34 27.94h0.5M4.96 27.94h0.5M5.58 27.94h0.5M6.20 27.94h0.5M6.82 27.94h0.5M7.44 27.94h0.5M8.06 27.94h0.5M8.68 27.94h0.5M2.48 29.19h0.5M3.10 29.19h0.5M3.72 29.19h0.5M4.34 29.19h0.5M4.96 29.19h0.5M5.58 29.19h0.5M6.20 29.19h0.5M2.48 30.43h0.5M3.10 30.43h0.5M3.72 30.43h0.5M4.34 30.43h0.5M4.96 30.43h0.5M5.58 30.43h0.5M2.48 31.68h0.5M3.10 31.68h0.5M3.72 31.68h0.5M4.34 31.68h0.5M4.96 31.68h0.5M5.58 31.68h0.5M4.96 32.92h0.5M5.58 32.92h0.5M6.20 32.92h0.5M6.82 32.92h0.5M25.42 32.92h0.5M26.04 32.92h0.5M26.66 32.92h0.5M27.28 32.92h0.5M27.90 32.92h0.5M28.52 32.92h0.5M29.14 32.92h0.5M29.76 32.92h0.5M4.96 34.16h0.5M5.58 34.16h0.5M6.20 34.16h0.5M6.82 34.16h0.5M19.22 34.16h0.5M19.84 34.16h0.5M20.46 34.16h0.5M21.08 34.16h0.5M21.70 34.16h0.5M22.32 34.16h0.5M22.94 34.16h0.5M23.56 34.16h0.5M2.48 36.66h0.5M3.10 36.66h0.5M3.72 36.66h0.5M4.34 36.66h0.5M4.96 36.66h0.5M5.58 36.66h0.5M6.20 36.66h0.5M6.82 36.66h0.5M7.44 36.66h0.5M2.48 37.90h0.5M3.10 37.90h0.5M3.72 37.90h0.5M4.34 37.90h0.5M4.96 37.90h0.5M5.58 37.90h0.5M6.20 37.90h0.5M6.82 37.90h0.5M7.44 37.90h0.5M2.48 42.88h0.5M3.10 42.88h0.5M3.72 42.88h0.5M4.34 42.88h0.5M4.96 42.88h0.5M5.58 42.88h0.5M6.20 42.88h0.5M6.82 42.88h0.5M7.44 42.88h0.5M8.06 42.88h0.5M8.68 42.88h0.5M2.48 44.12h0.5M3.10 44.12h0.5M3.72 44.12h0.5M4.34 44.12h0.5M4.96 44.12h0.5M5.58 44.12h0.5M6.20 44.12h0.5M2.48 45.37h0.5M3.10 45.37h0.5M3.72 45.37h0.5M4.34 45.37h0.5M4.96 45.37h0.5M5.58 45.37h0.5M2.48 46.62h0.5M3.10 46.62h0.5M3.72 46.62h0.5M4.34 46.62h0.5M4.96 46.62h0.5M5.58 46.62h0.5M4.96 47.86h0.5M5.58 47.86h0.5M6.20 47.86h0.5M6.82 47.86h0.5M17.98 47.86h0.5M18.60 47.86h0.5M19.22 47.86h0.5M19.84 47.86h0.5M20.46 47.86h0.5M21.08 47.86h0.5M21.70 47.86h0.5M22.32 47.86h0.5M4.96 49.11h0.5M5.58 49.11h0.5M6.20 49.11h0.5M6.82 49.11h0.5M17.98 49.11h0.5M18.60 49.11h0.5M19.22 49.11h0.5M19.84 49.11h0.5M20.46 49.11h0.5M21.08 49.11h0.5M21.70 49.11h0.5M22.32 49.11h0.5M2.48 51.59h0.5M3.10 51.59h0.5M3.72 51.59h0.5M4.34 51.59h0.5M4.96 51.59h0.5M5.58 51.59h0.5M6.20 51.59h0.5M6.82 51.59h0.5M7.44 51.59h0.5M2.48 52.84h0.5M3.10 52.84h0.5M3.72 52.84h0.5M4.34 52.84h0.5M4.96 52.84h0.5M5.58 52.84h0.5M6.20 52.84h0.5M6.82 52.84h0.5M7.44 52.84h0.5" stroke="#9cdcfe" stroke-width="0.9"/><path d="M20.46 0.55h0.5M21.08 0.55h0.5M21.70 0.55h0.5M22.32 0.55h0.5M22.94 0.55h0.5M23.56 0.55h0.5M24.18 0.55h0.5M24.80 0.55h0.5M25.42 0.55h0.5M26.04 0.55h0.5M26.66 0.55h0.5M27.28 0.55h0.5M16.74 1.80h0.5M17.36 1.80h0.5M17.98 1.80h0.5M18.60 1.80h0.5M19.22 1.80h0.5M19.84 1.80h0.5M20.46 1.80h0.5M21.08 1.80h0.5M21.70 1.80h0.5M22.32 1.80h0.5M22.94 1.80h0.5M23.56 1.80h0.5M24.18 1.80h0.5M24.80 1.80h0.5M25.42 1.80h0.5M26.04 1.80h0.5M26.66 1.80h0.5M27.28 1.80h0.5M27.90 1.80h0.5M28.52 1.80h0.5M29.14 1.80h0.5M29.76 1.80h0.5M30.38 1.80h0.5M31.00 1.80h0.5M31.62 1.80h0.5M32.24 1.80h0.5M32.86 1.80h0.5M33.48 1.80h0.5M34.10 1.80h0.5M34.72 1.80h0.5M35.34 1.80h0.5M35.96 1.80h0.5M36.58 1.80h0.5M37.20 1.80h0.5M15.50 3.04h0.5M16.12 3.04h0.5M16.74 3.04h0.5M17.36 3.04h0.5M17.98 3.04h0.5M18.60 3.04h0.5M19.22 3.04h0.5M19.84 3.04h0.5M20.46 3.04h0.5M21.08 3.04h0.5M21.70 3.04h0.5M22.32 3.04h0.5M22.94 3.04h0.5M23.56 3.04h0.5M24.18 3.04h0.5M24.80 3.04h0.5M25.42 3.04h0.5M26.04 3.04h0.5M26.66 3.04h0.5M27.28 3.04h0.5M27.90 3.04h0.5M28.52 3.04h0.5M10.54 6.78h0.5M11.16 6.78h0.5M11.78 6.78h0.5M12.40 6.78h0.5M13.02 6.78h0.5M13.64 6.78h0.5M14.26 6.78h0.5M14.88 6.78h0.5M8.68 8.02h0.5M9.30 8.02h0.5M9.92 8.02h0.5M10.54 8.02h0.5M11.16 8.02h0.5M11.78 8.02h0.5M6.82 13.00h0.5M7.44 13.00h0.5M8.06 13.00h0.5M8.68 13.00h0.5M9.30 13.00h0.5M9.92 13.00h0.5M10.54 13.00h0.5M11.16 13.00h0.5M6.82 14.25h0.5M7.44 14.25h0.5M8.06 14.25h0.5M8.68 14.25h0.5M9.30 14.25h0.5M9.92 14.25h0.5M10.54 14.25h0.5M11.16 14.25h0.5M11.78 14.25h0.5M12.40 14.25h0.5M13.02 14.25h0.5M13.64 14.25h0.5M14.26 14.25h0.5M14.88 14.25h0.5M4.96 16.74h0.5M5.58 16.74h0.5M6.20 16.74h0.5M6.82 16.74h0.5M7.44 16.74h0.5M8.06 29.19h0.32M8.68 29.19h0.5M9.30 29.19h0.5M9.92 29.19h0.5M10.54 29.19h0.5M11.16 29.19h0.5M11.78 29.19h0.32M12.40 29.19h0.32M13.02 29.19h0.32M13.64 29.19h0.5M14.26 29.19h0.5M14.88 29.19h0.5M15.50 29.19h0.32M16.12 29.19h0.5M16.74 29.19h0.5M17.36 29.19h0.5M17.98 29.19h0.5M18.60 29.19h0.5M19.22 29.19h0.5M19.84 29.19h0.5M20.46 29.19h0.5M21.08 29.19h0.5M21.70 29.19h0.5M22.32 29.19h0.5M22.94 29.19h0.32M23.56 29.19h0.5M24.18 29.19h0.5M24.80 29.19h0.32M25.42 29.19h0.5M26.04 29.19h0.5M26.66 29.19h0.32M7.44 30.43h0.32M8.06 30.43h0.32M8.68 32.92h0.32M9.30 32.92h0.5M9.92 32.92h0.5M10.54 32.92h0.5M11.16 32.92h0.5M11.78 32.92h0.5M12.40 32.92h0.5M13.02 32.92h0.5M13.64 32.92h0.5M14.26 32.92h0.32M14.88 32.92h0.5M15.50 32.92h0.5M16.12 32.92h0.32M16.74 32.92h0.5M17.36 32.92h0.5M17.98 32.92h0.5M18.60 32.92h0.5M19.22 32.92h0.5M19.84 32.92h0.5M20.46 32.92h0.5M21.08 32.92h0.5M21.70 32.92h0.32M22.32 32.92h0.5M22.94 32.92h0.5M23.56 32.92h0.32M8.68 34.16h0.32M9.30 34.16h0.5M9.92 34.16h0.5M10.54 34.16h0.5M11.16 34.16h0.5M11.78 34.16h0.32M12.40 34.16h0.5M13.02 34.16h0.5M13.64 34.16h0.5M14.26 34.16h0.5M14.88 34.16h0.5M15.50 34.16h0.32M16.12 34.16h0.5M16.74 34.16h0.5M17.36 34.16h0.32M8.06 44.12h0.32M8.68 44.12h0.5M9.30 44.12h0.5M9.92 44.12h0.5M10.54 44.12h0.5M11.16 44.12h0.5M11.78 44.12h0.32M12.40 44.12h0.32M13.02 44.12h0.32M13.64 44.12h0.5M14.26 44.12h0.5M14.88 44.12h0.5M15.50 44.12h0.5M16.12 44.12h0.32M16.74 44.12h0.5M17.36 44.12h0.5M17.98 44.12h0.32M18.60 44.12h0.5M19.22 44.12h0.5M19.84 44.12h0.5M20.46 44.12h0.5M21.08 44.12h0.5M21.70 44.12h0.5M22.32 44.12h0.5M22.94 44.12h0.5M23.56 44.12h0.5M24.18 44.12h0.32M24.80 44.12h0.5M25.42 44.12h0.32M26.04 44.12h0.5M26.66 44.12h0.5M27.28 44.12h0.5M27.90 44.12h0.5M28.52 44.12h0.5M29.14 44.12h0.5M29.76 44.12h0.5M30.38 44.12h0.5M31.00 44.12h0.5M31.62 44.12h0.32M32.24 44.12h0.5M32.86 44.12h0.5M33.48 44.12h0.5M34.10 44.12h0.5M34.72 44.12h0.32M35.34 44.12h0.5M35.96 44.12h0.5M36.58 44.12h0.5M37.20 44.12h0.32M37.82 44.12h0.5M38.44 44.12h0.5M39.06 44.12h0.32M39.68 44.12h0.5M40.30 44.12h0.5M40.92 44.12h0.5M41.54 44.12h0.5M42.16 44.12h0.5M42.78 44.12h0.5M43.40 44.12h0.32M44.02 44.12h0.5M44.64 44.12h0.5M45.26 44.12h0.5M45.88 44.12h0.5M46.50 44.12h0.5M47.12 44.12h0.5M47.74 44.12h0.5M48.36 44.12h0.5M48.98 44.12h0.32M49.60 44.12h0.5M50.22 44.12h0.5M50.84 44.12h0.5M51.46 44.12h0.5M52.08 44.12h0.32M52.70 44.12h0.5M53.32 44.12h0.5M53.94 44.12h0.5M54.56 44.12h0.5M55.18 44.12h0.32M55.80 44.12h0.5M56.42 44.12h0.5M57.04 44.12h0.5M57.66 44.12h0.5M58.28 44.12h0.32M58.90 44.12h0.5M59.52 44.12h0.5M60.14 44.12h0.5M60.76 44.12h0.5M61.38 44.12h0.5M62.00 44.12h0.5M62.62 44.12h0.5M63.24 44.12h0.5M63.86 44.12h0.5M7.44 45.37h0.32M8.06 45.37h0.5M8.68 45.37h0.5M9.30 45.37h0.5M9.92 45.37h0.5M10.54 45.37h0.5M11.16 45.37h0.5M11.78 45.37h0.5M12.40 45.37h0.5M13.02 45.37h0.5M13.64 45.37h0.5M14.26 45.37h0.5M14.88 45.37h0.5M15.50 45.37h0.5M16.12 45.37h0.5M16.74 45.37h0.5M17.36 45.37h0.5M17.98 45.37h0.5M18.60 45.37h0.5M19.22 45.37h0.5M19.84 45.37h0.5M20.46 45.37h0.5M21.08 45.37h0.5M21.70 45.37h0.32M22.32 45.37h0.5M22.94 45.37h0.32M23.56 45.37h0.5M24.18 45.37h0.5M24.80 45.37h0.5M25.42 45.37h0.5M26.04 45.37h0.5M26.66 45.37h0.5M27.28 45.37h0.5M27.90 45.37h0.5M28.52 45.37h0.5M29.14 45.37h0.5M29.76 45.37h0.5M30.38 45.37h0.5M31.00 45.37h0.5M31.62 45.37h0.5M32.24 45.37h0.5M32.86 45.37h0.5M33.48 45.37h0.5M34.10 45.37h0.5M34.72 45.37h0.5M35.34 45.37h0.5M35.96 45.37h0.5M36.58 45.37h0.32M37.20 45.37h0.5M37.82 45.37h0.5M38.44 45.37h0.5M39.06 45.37h0.5M39.68 45.37h0.5M40.30 45.37h0.5M40.92 45.37h0.5M41.54 45.37h0.5M42.16 45.37h0.32M42.78 45.37h0.5M43.40 45.37h0.5M44.02 45.37h0.5M44.64 45.37h0.5M45.26 45.37h0.5M45.88 45.37h0.5M46.50 45.37h0.5M47.12 45.37h0.5M47.74 45.37h0.5M48.36 45.37h0.5M48.98 45.37h0.5M49.60 45.37h0.5M50.22 45.37h0.5M50.84 45.37h0.5M51.46 45.37h0.5M52.08 45.37h0.5M52.70 45.37h0.5M53.32 45.37h0.5M53.94 45.37h0.5M54.56 45.37h0.5M55.18 45.37h0.5M55.80 45.37h0.5M56.42 45.37h0.5M57.04 45.37h0.5M57.66 45.37h0.5M58.28 45.37h0.5M58.90 45.37h0.5M59.52 45.37h0.5M60.14 45.37h0.5M60.76 45.37h0.5M61.38 45.37h0.32M8.68 47.86h0.32M9.30 47.86h0.5M9.92 47.86h0.5M10.54 47.86h0.5M11.16 47.86h0.5M11.78 47.86h0.5M12.40 47.86h0.5M13.02 47.86h0.5M13.64 47.86h0.5M14.26 47.86h0.32M14.88 47.86h0.5M15.50 47.86h0.5M16.12 47.86h0.32M8.68 49.11h0.32M9.30 49.11h0.5M9.92 49.11h0.5M10.54 49.11h0.5M11.16 49.11h0.5M11.78 49.11h0.5M12.40 49.11h0.5M13.02 49.11h0.5M13.64 49.11h0.5M14.26 49.11h0.32M14.88 49.11h0.5M15.50 49.11h0.5M16.12 49.11h0.32" stroke="#ce9178" stroke-width="0.9"/><path d="M4.34 5.53h0.5M4.96 5.53h0.5M5.58 5.53h0.5M6.20 5.53h0.5M4.34 11.76h0.5M4.96 11.76h0.5M5.58 11.76h0.5M6.20 11.76h0.5M4.34 20.47h0.5M4.96 20.47h0.5M5.58 20.47h0.5M6.20 20.47h0.5M4.34 24.21h0.5M4.96 24.21h0.5M5.58 24.21h0.5M6.20 24.21h0.5M6.82 24.21h0.5M9.30 36.66h0.5M9.92 36.66h0.5M10.54 36.66h0.5M11.16 36.66h0.5M9.30 51.59h0.5M9.92 51.59h0.5M10.54 51.59h0.5M11.16 51.59h0.5" stroke="#569cd6" stroke-width="0.9"/><path d="M7.44 5.53h0.5M8.06 5.53h0.5M8.68 5.53h0.5M9.30 5.53h0.5M9.92 5.53h0.5M10.54 5.53h0.5M11.16 5.53h0.5M11.78 5.53h0.5M12.40 5.53h0.5M13.02 5.53h0.5M13.64 5.53h0.5M14.26 5.53h0.5M7.44 11.76h0.5M8.06 11.76h0.5M8.68 11.76h0.5M9.30 11.76h0.5M9.92 11.76h0.5M10.54 11.76h0.5M11.16 11.76h0.5M11.78 11.76h0.5M12.40 11.76h0.5M13.02 11.76h0.5M13.64 11.76h0.5M14.26 11.76h0.5M7.44 15.49h0.5M8.06 15.49h0.5M8.68 15.49h0.5M9.30 15.49h0.5M9.92 15.49h0.5M10.54 15.49h0.5M11.16 15.49h0.5M11.78 15.49h0.5M7.44 20.47h0.5M8.06 20.47h0.5M8.68 20.47h0.5M9.30 20.47h0.5M9.92 20.47h0.5M10.54 20.47h0.5M11.16 20.47h0.5M11.78 20.47h0.5M12.40 20.47h0.5M13.02 20.47h0.5M13.64 20.47h0.5M14.26 20.47h0.5M14.88 20.47h0.5M8.06 21.72h0.5M8.68 21.72h0.5M9.30 21.72h0.5M9.92 21.72h0.5M10.54 21.72h0.5M11.16 21.72h0.5M11.78 21.72h0.5M12.40 21.72h0.5M15.50 24.21h0.5M16.12 24.21h0.5M16.74 24.21h0.5M17.36 24.21h0.5M17.98 24.21h0.5M18.60 24.21h0.5M19.22 24.21h0.5M19.84 24.21h0.5M20.46 24.21h0.5M21.08 24.21h0.5M21.70 24.21h0.5M22.32 24.21h0.5M22.94 24.21h0.5M23.56 24.21h0.5M24.18 24.21h0.5M10.54 27.94h0.5M11.16 27.94h0.5M11.78 27.94h0.5M12.40 27.94h0.5M13.02 27.94h0.5M13.64 27.94h0.5M14.26 27.94h0.5M14.88 27.94h0.5M15.50 27.94h0.5M16.12 27.94h0.5M16.74 27.94h0.5M17.36 27.94h0.5M9.30 37.90h0.5M9.92 37.90h0.5M10.54 37.90h0.5M11.16 37.90h0.5M11.78 37.90h0.5M12.40 37.90h0.5M13.02 37.90h0.5M13.64 37.90h0.5M14.26 37.90h0.5M14.88 37.90h0.5M15.50 37.90h0.5M16.12 37.90h0.5M10.54 42.88h0.5M11.16 42.88h0.5M11.78 42.88h0.5M12.40 42.88h0.5M13.02 42.88h0.5M13.64 42.88h0.5M14.26 42.88h0.5M14.88 42.88h0.5M15.50 42.88h0.5M16.12 42.88h0.5M16.74 42.88h0.5M17.36 42.88h0.5M9.30 52.84h0.5M9.92 52.84h0.5M10.54 52.84h0.5M11.16 52.84h0.5M11.78 52.84h0.5M12.40 52.84h0.5M13.02 52.84h0.5M13.64 52.84h0.5M14.26 52.84h0.5M14.88 52.84h0.5M15.50 52.84h0.5M16.12 52.84h0.5" stroke="#4ec9b0" stroke-width="0.9"/><path d="M1.24 6.78h0.5M1.86 6.78h0.5M2.48 6.78h0.5M3.10 6.78h0.5M3.72 6.78h0.5M4.34 6.78h0.5M4.96 6.78h0.5M5.58 6.78h0.5M6.20 6.78h0.5M6.82 6.78h0.5M7.44 6.78h0.5M8.06 6.78h0.5M1.24 8.02h0.5M1.86 8.02h0.5M2.48 8.02h0.5M3.10 8.02h0.5M3.72 8.02h0.5M4.34 8.02h0.5M4.96 8.02h0.5M5.58 8.02h0.5M6.20 8.02h0.5M1.24 13.00h0.5M1.86 13.00h0.5M2.48 13.00h0.5M3.10 13.00h0.5M3.72 13.00h0.5M4.34 13.00h0.5M1.24 14.25h0.5M1.86 14.25h0.5M2.48 14.25h0.5M3.10 14.25h0.5M3.72 14.25h0.5M4.34 14.25h0.5M8.06 24.21h0.5M8.68 24.21h0.5M9.30 24.21h0.5M9.92 24.21h0.32M10.54 24.21h0.5M11.16 24.21h0.5M11.78 24.21h0.5M12.40 24.21h0.5M13.02 24.21h0.5M13.64 24.21h0.5M18.60 27.94h0.5M19.22 27.94h0.5M19.84 27.94h0.5M20.46 27.94h0.5M21.08 27.94h0.5M21.70 27.94h0.5M22.32 27.94h0.5M22.94 27.94h0.32M23.56 27.94h0.5M24.18 27.94h0.5M24.80 27.94h0.5M25.42 27.94h0.5M31.62 32.92h0.5M32.24 32.92h0.5M32.86 32.92h0.5M33.48 32.92h0.5M34.10 32.92h0.5M34.72 32.92h0.5M35.34 32.92h0.5M35.96 32.92h0.5M36.58 32.92h0.5M37.20 32.92h0.5M37.82 32.92h0.5M38.44 32.92h0.5M25.42 34.16h0.5M26.04 34.16h0.5M26.66 34.16h0.5M27.28 34.16h0.5M27.90 34.16h0.5M28.52 34.16h0.5M29.14 34.16h0.5M29.76 34.16h0.5M17.36 37.90h0.5M17.98 37.90h0.5M18.60 37.90h0.5M19.22 37.90h0.5M19.84 37.90h0.5M20.46 37.90h0.5M18.60 42.88h0.5M19.22 42.88h0.5M19.84 42.88h0.5M20.46 42.88h0.5M21.08 42.88h0.32M21.70 42.88h0.5M22.32 42.88h0.5M22.94 42.88h0.5M23.56 42.88h0.5M24.18 47.86h0.5M24.80 47.86h0.5M25.42 47.86h0.5M26.04 47.86h0.5M26.66 47.86h0.5M27.28 47.86h0.5M27.90 47.86h0.5M28.52 47.86h0.5M29.14 47.86h0.5M29.76 47.86h0.5M30.38 47.86h0.5M31.00 47.86h0.5M24.18 49.11h0.5M24.80 49.11h0.5M25.42 49.11h0.5M26.04 49.11h0.5M26.66 49.11h0.5M27.28 49.11h0.5M27.90 49.11h0.5M28.52 49.11h0.5M29.14 49.11h0.5M29.76 49.11h0.5M30.38 49.11h0.5M31.00 49.11h0.5M17.36 52.84h0.5M17.98 52.84h0.5M18.60 52.84h0.5M19.22 52.84h0.5M19.84 52.84h0.5M20.46 52.84h0.5" stroke="#4fc1ff" stroke-width="0.9"/><path d="M0.00 9.27h0.32M0.00 17.98h0.32M0.00 22.96h0.32M14.26 24.21h0.32M26.66 24.21h0.32M9.30 27.94h0.32M17.98 27.94h0.32M26.04 27.94h0.32M6.82 29.19h0.32M27.28 29.19h0.32M6.20 30.43h0.32M8.68 30.43h0.32M6.20 31.68h0.32M7.44 32.92h0.32M24.18 32.92h0.32M30.38 32.92h0.32M40.30 32.92h0.32M7.44 34.16h0.32M17.98 34.16h0.32M24.18 34.16h0.32M31.62 34.16h0.32M3.10 35.41h0.32M8.06 36.66h0.32M11.78 36.66h0.32M8.06 37.90h0.32M16.74 37.90h0.32M21.08 37.90h0.32M1.86 39.15h0.32M9.30 42.88h0.32M17.98 42.88h0.32M24.18 42.88h0.32M6.82 44.12h0.32M6.20 45.37h0.32M62.00 45.37h0.32M6.20 46.62h0.32M7.44 47.86h0.32M16.74 47.86h0.32M22.94 47.86h0.32M32.86 47.86h0.32M7.44 49.11h0.32M16.74 49.11h0.32M22.94 49.11h0.32M32.86 49.11h0.32M3.10 50.35h0.32M8.06 51.59h0.32M11.78 51.59h0.32M8.06 52.84h0.32M16.74 52.84h0.32M21.08 52.84h0.32M1.86 54.09h0.32M0.62 55.33h0.32" stroke="#d4d4d4" stroke-width="0.9"/><path d="M1.24 25.45h0.5M1.24 39.15h0.32M1.24 40.39h0.32M1.24 54.09h0.32" stroke="#da70d6" stroke-width="0.9"/><path d="M2.48 26.70h0.5M3.10 26.70h0.5M3.72 26.70h0.5M4.34 26.70h0.5M4.96 26.70h0.5M5.58 26.70h0.5M6.20 26.70h0.5M6.82 26.70h0.5M7.44 26.70h0.5M8.06 26.70h0.5M2.48 41.63h0.32M3.10 41.63h0.32M4.34 41.63h0.5M4.96 41.63h0.5M5.58 41.63h0.5M6.20 41.63h0.5M6.82 41.63h0.5M7.44 41.63h0.5M8.06 41.63h0.5M8.68 41.63h0.5" stroke="#6a9955" stroke-width="0.9"/><path d="M24.80 24.21h0.32M25.42 24.21h0.32M27.90 24.21h0.32M3.72 32.92h0.32M39.68 32.92h0.32M3.72 34.16h0.32M31.00 34.16h0.32M3.72 47.86h0.32M32.24 47.86h0.32M3.72 49.11h0.32M32.24 49.11h0.32M0.00 55.33h0.32" stroke="#ffd700" stroke-width="0.9"/><path d="M7.44 31.68h0.32M2.48 35.41h0.32M7.44 46.62h0.32M2.48 50.35h0.32" stroke="#179fff" stroke-width="0.9"/></g></svg>
<div class="r" style="left:1174px;top:85.5px;width:10px;height:593.5px;background:#212121;"></div>
<div class="r" style="left:1174px;top:85.5px;width:1px;height:593.5px;background:#2a2a2a;"></div>
<div class="r" style="left:1174.5px;top:356.6px;width:9.5px;height:2px;background:#a0a0a0;"></div>
<svg class="i" style="left:0px;top:0px;pointer-events:none;" width="1184" height="679" viewBox="0 0 1184 679" fill="none"><rect x="48.15" y="105.95" width="130.20" height="23.50" stroke="#fa0000" stroke-width="2.1"/><rect x="57.45" y="169.05" width="56.70" height="17.50" stroke="#fa0000" stroke-width="2.1"/><rect x="60.45" y="310.35" width="136.90" height="40.10" stroke="#fa0000" stroke-width="2.1"/><rect x="383.35" y="277.95" width="731.40" height="214.50" stroke="#fa0000" stroke-width="2.1"/><rect x="403.85" y="331.15" width="64.60" height="37.40" stroke="#fa0000" stroke-width="2.1"/><rect x="481.05" y="386.05" width="101.90" height="37.40" stroke="#fa0000" stroke-width="2.1"/></svg>
<span class="t" style="left:1122.4px;top:658.3px;line-height:20px;font-size:9.4px;letter-spacing:-0.45px;color:#5a5a5a">@51CTO博客</span>
</body></html>
